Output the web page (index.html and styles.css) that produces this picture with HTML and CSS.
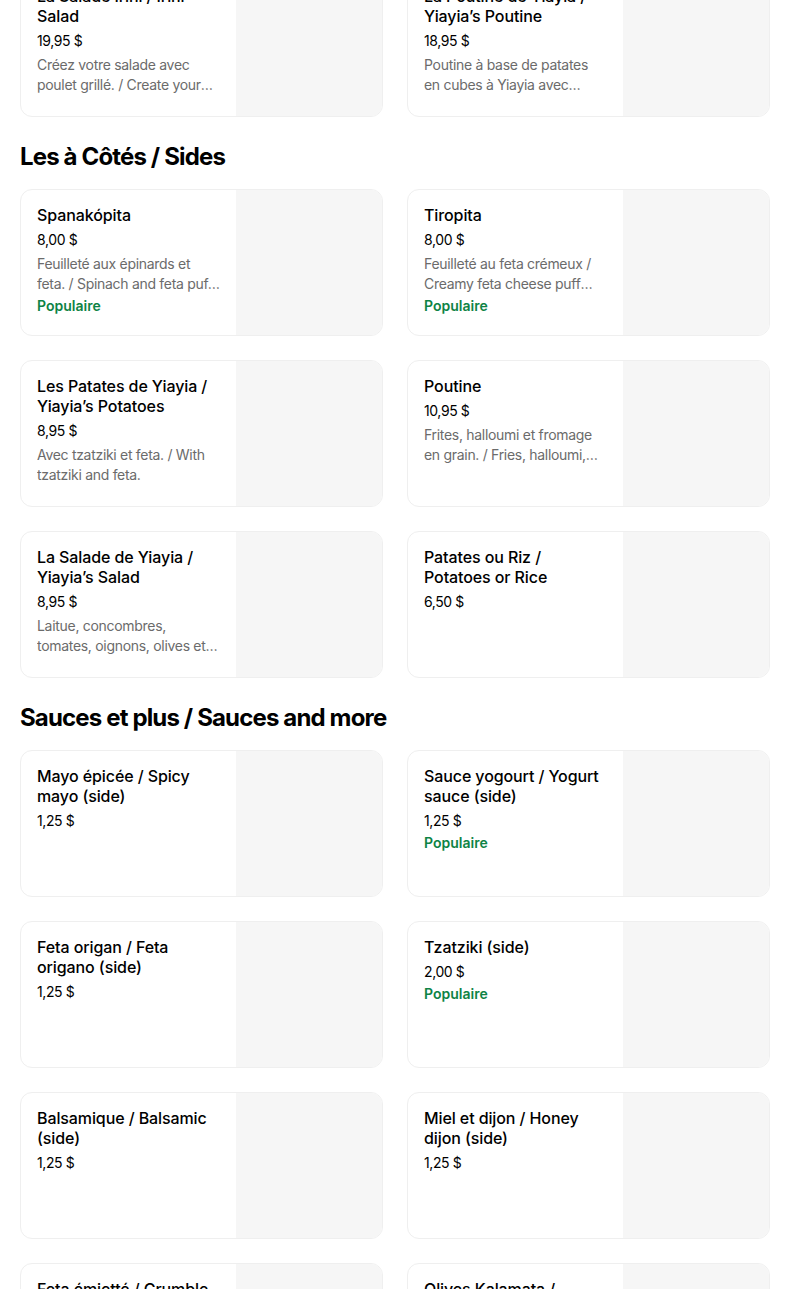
FILE: index.html
```html
<!DOCTYPE html>
<html lang="fr">
<head>
<meta charset="utf-8">
<title>Menu</title>
<link rel="stylesheet" href="styles.css">
</head>
<body>
<main class="page">
  <section class="section">
    <div class="grid">
      <article class="card">
        <div class="info">
          <h3 class="title">La Salade Irini / Irini Salad</h3>
          <div class="price">19,95 $</div>
          <p class="desc">Créez votre salade avec poulet grillé. / Create your salad with grilled chicken.</p>
        </div>
        <div class="thumb"></div>
      </article>
      <article class="card">
        <div class="info">
          <h3 class="title">La Poutine de Yiayia / Yiayia’s Poutine</h3>
          <div class="price">18,95 $</div>
          <p class="desc">Poutine à base de patates en cubes à Yiayia avec poulet, sauce et fromage.</p>
        </div>
        <div class="thumb"></div>
      </article>
    </div>
  </section>

  <section class="section">
    <h2 class="heading">Les à Côtés / Sides</h2>
    <div class="grid">
      <article class="card">
        <div class="info">
          <h3 class="title">Spanakópita</h3>
          <div class="price">8,00 $</div>
          <p class="desc">Feuilleté aux épinards et feta. / Spinach and feta puff pastry.</p>
          <div class="tag">Populaire</div>
        </div>
        <div class="thumb"></div>
      </article>
      <article class="card">
        <div class="info">
          <h3 class="title">Tiropita</h3>
          <div class="price">8,00 $</div>
          <p class="desc">Feuilleté au feta crémeux / Creamy feta cheese puff pastry.</p>
          <div class="tag">Populaire</div>
        </div>
        <div class="thumb"></div>
      </article>
      <article class="card">
        <div class="info">
          <h3 class="title">Les Patates de Yiayia / Yiayia’s Potatoes</h3>
          <div class="price">8,95 $</div>
          <p class="desc">Avec tzatziki et feta. / With tzatziki and feta.</p>
        </div>
        <div class="thumb"></div>
      </article>
      <article class="card">
        <div class="info">
          <h3 class="title">Poutine</h3>
          <div class="price">10,95 $</div>
          <p class="desc">Frites, halloumi et fromage en grain. / Fries, halloumi, and cheese curds.</p>
        </div>
        <div class="thumb"></div>
      </article>
      <article class="card">
        <div class="info">
          <h3 class="title">La Salade de Yiayia / Yiayia’s Salad</h3>
          <div class="price">8,95 $</div>
          <p class="desc">Laitue, concombres, tomates, oignons, olives et feta.</p>
        </div>
        <div class="thumb"></div>
      </article>
      <article class="card">
        <div class="info">
          <h3 class="title">Patates ou Riz / Potatoes or Rice</h3>
          <div class="price">6,50 $</div>
        </div>
        <div class="thumb"></div>
      </article>
    </div>
  </section>

  <section class="section">
    <h2 class="heading">Sauces et plus / Sauces and more</h2>
    <div class="grid">
      <article class="card">
        <div class="info">
          <h3 class="title">Mayo épicée / Spicy mayo (side)</h3>
          <div class="price">1,25 $</div>
        </div>
        <div class="thumb"></div>
      </article>
      <article class="card">
        <div class="info">
          <h3 class="title">Sauce yogourt / Yogurt sauce (side)</h3>
          <div class="price">1,25 $</div>
          <div class="tag">Populaire</div>
        </div>
        <div class="thumb"></div>
      </article>
      <article class="card">
        <div class="info">
          <h3 class="title">Feta origan / Feta origano (side)</h3>
          <div class="price">1,25 $</div>
        </div>
        <div class="thumb"></div>
      </article>
      <article class="card">
        <div class="info">
          <h3 class="title">Tzatziki (side)</h3>
          <div class="price">2,00 $</div>
          <div class="tag">Populaire</div>
        </div>
        <div class="thumb"></div>
      </article>
      <article class="card">
        <div class="info">
          <h3 class="title">Balsamique / Balsamic (side)</h3>
          <div class="price">1,25 $</div>
        </div>
        <div class="thumb"></div>
      </article>
      <article class="card">
        <div class="info">
          <h3 class="title">Miel et dijon / Honey dijon (side)</h3>
          <div class="price">1,25 $</div>
        </div>
        <div class="thumb"></div>
      </article>
      <article class="card">
        <div class="info">
          <h3 class="title">Feta émietté / Crumble feta (side)</h3>
          <div class="price">1,25 $</div>
        </div>
        <div class="thumb"></div>
      </article>
      <article class="card">
        <div class="info">
          <h3 class="title">Olives Kalamata / Kalamata olives (side)</h3>
          <div class="price">1,25 $</div>
        </div>
        <div class="thumb"></div>
      </article>
    </div>
  </section>
</main>
</body>
</html>
```

FILE: styles.css
```css
* {
  box-sizing: border-box;
}

html, body {
  margin: 0;
  padding: 0;
  background: #ffffff;
}

body {
  font-family: Inter, "Noto Sans", "Liberation Sans", sans-serif;
  color: #000000;
}

.page {
  width: 750px;
  margin: -30px 0 0 20px;
}

.heading {
  margin: 24px 0 16px;
  font-size: 24px;
  line-height: 32px;
  font-weight: 700;
  letter-spacing: -0.85px;
  color: #000;
}

.grid {
  display: grid;
  grid-template-columns: 363px 363px;
  column-gap: 24px;
  row-gap: 24px;
}

.card {
  display: flex;
  height: 147px;
  border: 1px solid #efefef;
  border-radius: 12px;
  overflow: hidden;
  background: #fff;
}

.info {
  flex: 1;
  min-width: 0;
  padding: 15px 16px 0 16px;
}

.title {
  margin: 0;
  font-size: 16px;
  line-height: 20px;
  font-weight: 500;
  letter-spacing: -0.1px;
  color: #000;
  display: -webkit-box;
  -webkit-line-clamp: 2;
  -webkit-box-orient: vertical;
  overflow: hidden;
}

.price {
  margin-top: 5px;
  font-size: 14px;
  line-height: 20px;
  font-weight: 400;
  color: #000;
  letter-spacing: -0.4px;
}

.desc {
  margin: 4px 0 0;
  font-size: 14px;
  line-height: 20px;
  color: #6b6b6b;
  letter-spacing: -0.3px;
  display: -webkit-box;
  -webkit-line-clamp: 2;
  -webkit-box-orient: vertical;
  overflow: hidden;
}

.tag {
  margin-top: 2px;
  font-size: 14px;
  line-height: 20px;
  font-weight: 600;
  color: #0e8345;
}

.thumb {
  flex: 0 0 146px;
  height: 100%;
  background: #f6f6f6;
}
```
